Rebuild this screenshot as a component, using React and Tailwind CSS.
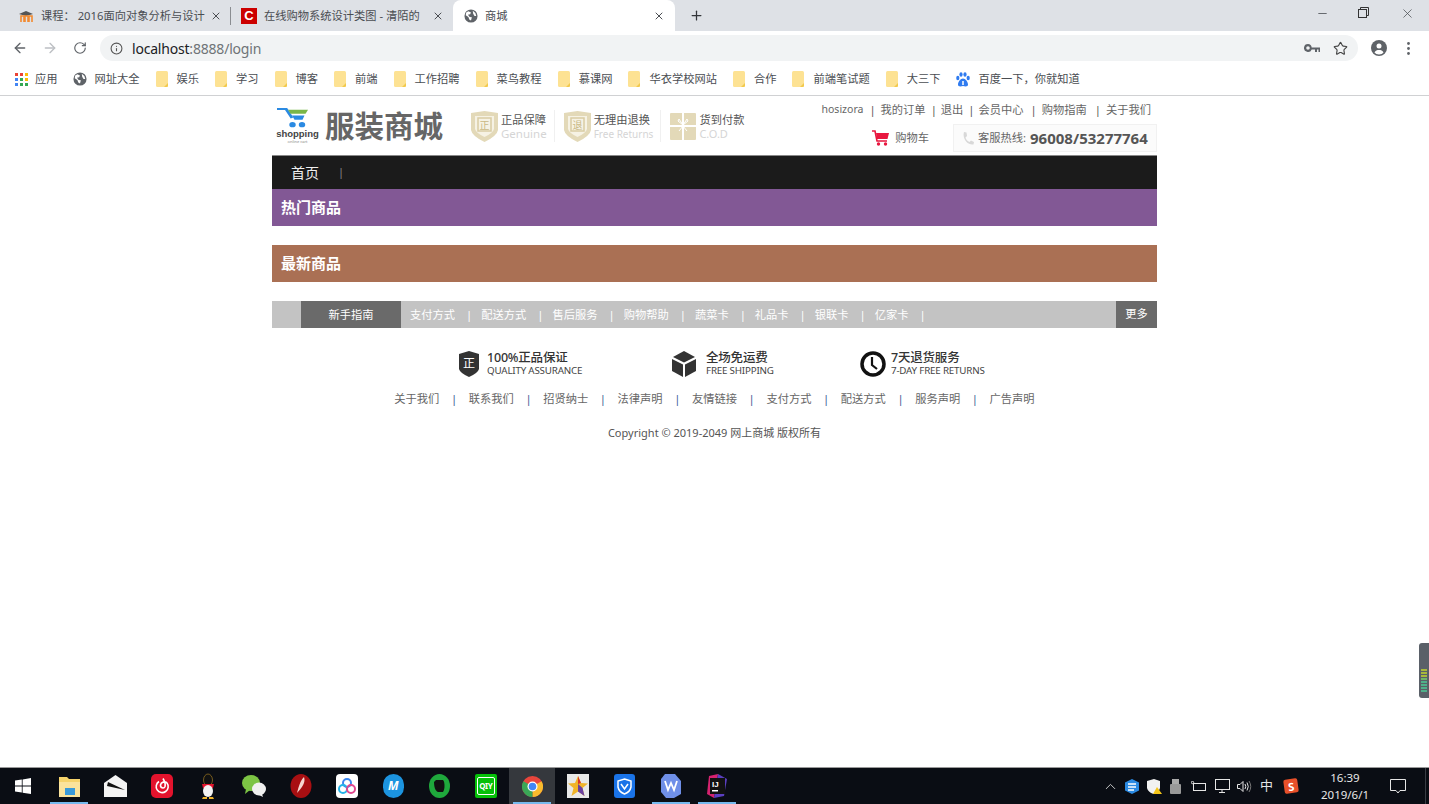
import React from "react";
import { ArrowLeft, ArrowRight, RotateCw, Info, Star, X, Plus, Minus, ChevronUp } from "lucide-react";

const bookmarks = [
  ["网址大全", "globe"], ["娱乐"], ["学习"], ["博客"], ["前端"], ["工作招聘"], ["菜鸟教程"], ["慕课网"],
  ["华衣学校网站"], ["合作"], ["前端笔试题"], ["大三下"], ["百度一下，你就知道", "paw"],
];
const topLinks = [
  ["我的订单", "ml-[6px] mr-[5px]"],
  ["退出", "ml-[5px] mr-[4px]"],
  ["会员中心", "ml-[5px] mr-[4px]"],
  ["购物指南", "ml-[7px] mr-[5px]"],
  ["关于我们", "ml-[8px] mr-[5px]"],
];
const guideLinks = ["支付方式", "配送方式", "售后服务", "购物帮助", "蔬菜卡", "礼品卡", "银联卡", "亿家卡"];
const footerLinks = ["关于我们", "联系我们", "招贤纳士", "法律声明", "友情链接", "支付方式", "配送方式", "服务声明", "广告声明"];

const Globe = ({ size = 14 }) => (
  <svg width={size} height={size} viewBox="0 0 16 16" className="shrink-0">
    <circle cx="8" cy="8" r="7.5" fill="#5f6368" />
    <path d="M5 2.500 8 4 7 6 4.500 6.500 6.500 9 9 9.500 8 13 6 12 5 9 2 7 2.500 4Z M10 2 13 4.500 14 8 12 8 10.500 5.500Z" fill="#fff" />
  </svg>
);

const Folder = () => (
  <svg width="12" height="16" viewBox="0 0 12 16" className="shrink-0">
    <path d="M0 1.500Q0 0 1.500 0H10.500Q12 0 12 1.500V14.500Q12 16 10.500 16H1.500Q0 16 0 14.500Z" fill="#fde293" />
    <path d="M8 16 12 12V14.500Q12 16 10.500 16Z" fill="#f2c94c" />
  </svg>
);

const Paw = () => (
  <svg width="14" height="15" viewBox="0 0 14 15" className="shrink-0">
    <g fill="#2f7bf0">
      <ellipse cx="1.800" cy="6" rx="1.600" ry="2.200" />
      <ellipse cx="5" cy="2.500" rx="1.600" ry="2.300" />
      <ellipse cx="9" cy="2.500" rx="1.600" ry="2.300" />
      <ellipse cx="12.200" cy="6" rx="1.600" ry="2.200" />
      <path d="M7 6.500C9.500 6.500 12 10 12 12.500 12 15 9 14.500 7 14 5 14.500 2 15 2 12.500 2 10 4.500 6.500 7 6.500Z" />
    </g>
    <path d="M7 9V13" stroke="#fff" strokeWidth="1.500" />
  </svg>
);

const Apps = () => (
  <svg width="13" height="13" viewBox="0 0 13 13" className="shrink-0">
    {["#ea4335", "#ea4335", "#fbbc04", "#4285f4", "#34a853", "#fbbc04", "#4285f4", "#34a853", "#34a853"].map((c, i) => (
      <rect key={i} x={(i % 3) * 5} y={Math.floor(i / 3) * 5} width="3" height="3" fill={c} />
    ))}
  </svg>
);

const Tab = ({ icon, text, active, className }) => (
  <div className={`flex items-center h-full shrink-0 ${className} ${active ? "bg-white rounded-t-lg" : ""}`}>
    {icon}
    <span className="ml-[7px] mt-[1px] flex-1 min-w-0 whitespace-nowrap text-[11.250px] text-[#4a4d52]">{text}</span>
    <X size={12} strokeWidth={2} className="text-[#4a4d52] shrink-0" />
  </div>
);

const Shield = ({ ch }) => (
  <svg width="27" height="31" viewBox="0 0 27 31" className="shrink-0">
    <path d="M0 2 13.500 0 27 2V19Q26 25 13.500 31 1 25 0 19Z" fill="#e3d9b8" />
    <path d="M4 5H23V18Q22 22 13.500 26 5 22 4 18Z" fill="#f6f2e4" />
    <rect x="7" y="7" width="13" height="13" fill="none" stroke="#d9cca3" strokeWidth="1.500" />
    <text x="13.500" y="18" textAnchor="middle" fontSize="10" fill="#c9b985">{ch}</text>
  </svg>
);

const Gift = () => (
  <svg width="26" height="27" viewBox="0 0 26 27" className="shrink-0">
    <rect width="26" height="27" rx="1" fill="#e3d9b8" />
    <path d="M12 0H14V27H12ZM0 12H26V14H0Z" fill="#fff" />
    <path d="M13 12 8 8 9 6ZM13 12 18 8 17 6ZM13 13 9 18M13 13 17 18" stroke="#fff" fill="none" />
  </svg>
);

const Badge = ({ icon, title, sub, subSize, divider }) => (
  <div className="flex items-center">
    {icon}
    <div className="ml-[3px] mt-[2px] leading-[14px]">
      <div className="text-[11.250px] text-[#555] whitespace-nowrap">{title}</div>
      <div className={`${subSize} text-[#d5d5d5] whitespace-nowrap`}>{sub}</div>
    </div>
    {divider && <div className="w-px h-[32px] bg-[#f0f0f0] mx-[7px]" />}
  </div>
);

const Logo = () => (
  <div className="flex flex-col items-start w-[41px] shrink-0">
    <svg width="32" height="20" viewBox="0 0 32 24" preserveAspectRatio="none">
      <path d="M0 1H9L15 12" fill="none" stroke="#2b8ae2" strokeWidth="3" />
      <path d="M11 2H31L28.500 7H13.500Z" fill="#7ab648" />
      <path d="M15 9H27.500L25.500 14H17.500Z" fill="#2b8ae2" />
      <circle cx="15.500" cy="20" r="3.200" fill="#2b8ae2" />
      <circle cx="25" cy="20" r="3.200" fill="#2b8ae2" />
    </svg>
    <div className="self-center text-[9.500px] leading-[10px] mt-[1px] font-bold text-[#444] font-['Liberation_Sans',sans-serif]">shopping</div>
    <div className="self-center text-[4px] leading-[5px] text-[#888]">online cart</div>
  </div>
);

const Service = ({ icon, title, sub, className }) => (
  <div className={`flex items-center shrink-0 ${className}`}>
    {icon}
    <div className="leading-[13px] whitespace-nowrap">
      <div className="text-[12.500px] font-medium text-[#333] tracking-[-0.2px]">{title}</div>
      <div className="text-[9.800px] text-[#444] tracking-[-0.2px]">{sub}</div>
    </div>
  </div>
);

const TaskIcon = ({ children, open, active }) => (
  <div className={`relative w-[46.300px] h-full flex items-center justify-center shrink-0 ${active ? "bg-[#35383d]" : ""}`}>
    {children}
    {open && <div className="absolute left-[4px] right-[4px] bottom-0 h-[2px] bg-[#76b9ed]" />}
  </div>
);

export default function App() {
  return (
    <div className="w-[1429px] h-[804px] overflow-hidden flex flex-col relative bg-white font-['Noto_Sans','Noto_Sans_CJK_SC',sans-serif]">
      {/* tab strip */}
      <div className="h-[31px] shrink-0 bg-[#dee1e6] flex pl-[8px] text-[#4a4d52]">
        <Tab
          className="w-[217px] pl-[10px] pr-[3px]"
          text="课程： 2016面向对象分析与设计"
          icon={<svg width="16" height="14" viewBox="0 0 16 14" className="shrink-0"><path d="M1 5 8 2 15 5 8 7Z" fill="#555" /><path d="M3 13V7H6V13M7 13V7H10V13M11 13V7H14V13" stroke="#f28a30" strokeWidth="1.600" fill="none" /></svg>}
        />
        <div className="w-px h-[18px] bg-[#8a8d91] mt-[7px] ml-[5px]" />
        <Tab
          className="w-[222px] pl-[10px] pr-[9px]"
          text="在线购物系统设计类图 - 清陌的"
          icon={<div className="w-[16px] h-[16px] bg-[#cc0000] flex items-center justify-center text-white font-bold text-[13px] leading-none shrink-0 font-['Liberation_Sans',sans-serif]">C</div>}
        />
        <Tab active className="w-[222px] pl-[11px] pr-[10px]" text="商城" icon={<Globe />} />
        <div className="flex items-center ml-[14px]"><Plus size={15} strokeWidth={2} className="text-[#33363a]" /></div>
        <div className="ml-auto flex items-start pt-[7px] text-[#4a4d52]">
          <Minus size={13} strokeWidth={1.500} className="mr-[29px]" />
          <svg width="11" height="11" viewBox="0 0 11 11" className="mr-[31px]" fill="none" stroke="#333" strokeWidth="1"><rect x="0.500" y="2.500" width="8" height="8" /><path d="M2.500 2.500V0.500H10.500V8.500H8.500" /></svg>
          <X size={15} strokeWidth={1.200} className="mr-[14px] -mt-[1px]" />
        </div>
      </div>

      {/* toolbar */}
      <div className="h-[32px] shrink-0 flex items-center bg-white text-[#5f6368] pt-[2px]">
        <ArrowLeft size={16} strokeWidth={2} className="ml-[12px]" />
        <ArrowRight size={16} strokeWidth={2} className="ml-[14px] text-[#bcbfc3]" />
        <RotateCw size={14} strokeWidth={2} className="ml-[15px]" />
        <div className="ml-[13px] w-[1258px] h-[26px] rounded-full bg-[#f1f3f4] flex items-center pl-[10px] pr-[9px]">
          <Info size={13} strokeWidth={2} className="text-[#555]" />
          <span className="ml-[9px] text-[14px] text-[#202124] tracking-[-0.2px]">localhost<span className="text-[#6f7377]">:8888/login</span></span>
          <svg width="16" height="9" viewBox="0 0 16 9" className="ml-auto mr-[13px]" fill="#5f6368"><path d="M4 0a4 4 0 1 0 3.700 5.500H11V8h2V5.500h1.500V8H16V3.500H7.700A4 4 0 0 0 4 0Zm0 2.200a1.800 1.800 0 1 1 0 3.600 1.800 1.800 0 0 1 0-3.600Z" /></svg>
          <Star size={15} strokeWidth={1.800} className="text-[#444] mr-[1px]" />
        </div>
        <svg width="16" height="16" viewBox="0 0 16 16" className="ml-[13px]"><circle cx="8" cy="8" r="8" fill="#5f6368" /><circle cx="8" cy="6" r="2.500" fill="#fff" /><path d="M3.500 12.500C4.500 10.500 6 10 8 10s3.500.5 4.500 2.500C11.500 13.800 10 14.500 8 14.500S4.500 13.800 3.500 12.500Z" fill="#fff" /></svg>
        <svg width="3" height="13" viewBox="0 0 3 13" className="ml-[20px]" fill="#5f6368"><circle cx="1.500" cy="1.500" r="1.400" /><circle cx="1.500" cy="6.500" r="1.400" /><circle cx="1.500" cy="11.500" r="1.400" /></svg>
      </div>

      {/* bookmarks */}
      <div className="h-[33px] shrink-0 flex items-center border-b border-[#d0d1d3] pl-[15px] text-[11.250px] text-[#4a4d52] bg-white">
        <div className="flex items-center gap-[7px] mr-[15px]"><Apps /><span>应用</span></div>
        {bookmarks.map(([name, kind]) => (
          <div key={name} className={`flex items-center mr-[16px] whitespace-nowrap ${kind ? "gap-[8px]" : "gap-[9px]"}`}>
            {kind === "globe" ? <Globe /> : kind === "paw" ? <Paw /> : <Folder />}
            <span>{name}</span>
          </div>
        ))}
      </div>

      {/* page */}
      <div className="flex-1 min-h-0 bg-white">
        <div className="w-[885px] ml-[272px]">
          <div className="h-[59px] flex justify-between">
            <div className="flex items-center pl-[5px] pt-[1px]">
              <Logo />
              <div className="ml-[7px] text-[29.500px] leading-none font-bold text-[#666] whitespace-nowrap w-[146px]">服装商城</div>
              <Badge icon={<Shield ch="正" />} title="正品保障" sub="Genuine" subSize="text-[11.500px]" divider />
              <div className="ml-[2px]"><Badge icon={<Shield ch="退" />} title="无理由退换" sub="Free Returns" subSize="text-[10px]" divider /></div>
              <div className="ml-[2px]"><Badge icon={<Gift />} title="货到付款" sub="C.O.D" subSize="text-[11px]" /></div>
            </div>
            <div className="flex flex-col items-end">
              <div className="flex items-center h-[28px] pr-[6px] text-[11.250px] text-[#666] whitespace-nowrap">
                <span className="text-[10.500px]">hosizora</span>
                {topLinks.map(([t, gap]) => (
                  <React.Fragment key={t}>
                    <span className={`${gap} text-[#555]`}>|</span>
                    <span>{t}</span>
                  </React.Fragment>
                ))}
              </div>
              <div className="flex items-center">
                <svg width="17" height="16" viewBox="0 0 17 16" className="mr-[6px]"><path d="M0 1H3L5 11H15" fill="none" stroke="#e8173f" strokeWidth="1.600" /><path d="M4 3H17L15.500 9H5Z" fill="#e8173f" /><circle cx="6.500" cy="14" r="1.700" fill="#e8173f" /><circle cx="13.500" cy="14" r="1.700" fill="#e8173f" /></svg>
                <span className="text-[11.250px] text-[#666] mr-[24px]">购物车</span>
                <div className="w-[204px] h-[28px] bg-[#fbfbfb] border border-[#f1f1f1] flex items-center pl-[8px] whitespace-nowrap">
                  <svg width="12" height="13" viewBox="0 0 12 13" fill="#d8d8d8"><path d="M2 0 4.500 0.500 5 4 3.500 5.500C4 7.500 5.500 9 7.500 10L9 8.500 12 10 11.500 12.500C6 13.500 0 7 2 0Z" /></svg>
                  <span className="ml-[4px] text-[11.250px] text-[#666]">客服热线:</span>
                  <span className="ml-[4px] text-[15px] font-bold text-[#555]">96008/53277764</span>
                </div>
              </div>
            </div>
          </div>

          <nav className="h-[34px] bg-[#1b1b1b] border-t border-[#888] flex items-center pl-[19px] pb-[1px] text-[14px] text-[#f0f0f0]">
            <span>首页</span>
            <span className="ml-[19px] text-[11px] text-[#888]">|</span>
          </nav>
          <div className="h-[37px] bg-[#825895] flex items-center pl-[9px] pb-[1px] text-[15px] font-bold text-white">热门商品</div>
          <div className="h-[37px] mt-[19px] bg-[#aa7054] flex items-center pl-[9px] pb-[1px] text-[15px] font-bold text-white">最新商品</div>

          <div className="h-[27px] mt-[19px] bg-[#c3c3c3] flex items-stretch text-[11.250px] text-white">
            <div className="ml-[29px] w-[100px] bg-[#6a6a6a] flex items-center justify-center pt-[1px]">新手指南</div>
            <div className="flex items-center pl-[9px] pt-[1px] flex-1">
              {guideLinks.map((t) => (
                <React.Fragment key={t}>
                  <span className="whitespace-nowrap">{t}</span>
                  <span className="ml-[11px] mr-[9px]">|</span>
                </React.Fragment>
              ))}
            </div>
            <div className="w-[41px] bg-[#6a6a6a] flex items-center justify-center">更多</div>
          </div>

          <div className="mt-[20px] h-[32px] flex items-center pl-[187px]">
            <Service
              className="w-[213px]"
              title="100%正品保证"
              sub="QUALITY ASSURANCE"
              icon={<svg width="20" height="26" viewBox="0 0 20 26" className="mr-[8px]"><path d="M0 3 10 0 20 3V18Q19 22 10 26 1 22 0 18Z" fill="#333" /><text x="10" y="17" textAnchor="middle" fontSize="12" fill="#fff">正</text></svg>}
            />
            <Service
              className="w-[188px]"
              title="全场免运费"
              sub="FREE SHIPPING"
              icon={<svg width="24" height="26" viewBox="0 0 24 26" className="mr-[10px]" fill="#333"><path d="M12 0 23 6 12 11.500 1 6Z" /><path d="M0 8 11 13.500V26L0 20Z" /><path d="M24 8 13 13.500V26L24 20Z" /></svg>}
            />
            <Service
              title="7天退货服务"
              sub="7-DAY FREE RETURNS"
              icon={<svg width="26" height="26" viewBox="0 0 26 26" className="mr-[5px]" fill="none" stroke="#111"><circle cx="13" cy="13" r="11" strokeWidth="3.500" /><path d="M12 6V14L17 18" strokeWidth="2.200" /></svg>}
            />
          </div>

          <div className="mt-[10px] h-[18px] flex items-center justify-center text-[11.250px] text-[#666] whitespace-nowrap">
            {footerLinks.map((t, i) => (
              <React.Fragment key={t}>
                {i > 0 && <span className="mx-[11.600px] text-[#3c5a94]">|</span>}
                <span>{t}</span>
              </React.Fragment>
            ))}
          </div>
          <div className="mt-[16px] text-center text-[11px] leading-[18px] text-[#555]">Copyright © 2019-2049 网上商城 版权所有</div>
        </div>
      </div>

      {/* side widget */}
      <div className="absolute right-0 top-[643px] w-[10px] h-[55px] bg-[#5a6068] rounded-l-[3px] flex flex-col justify-end items-center pb-[6px] gap-px">
        {["bg-[#a8b83c]", "bg-[#a8b83c]", "bg-[#a8b83c]", "bg-[#6fb56a]", "bg-[#4fb08a]", "bg-[#4fb08a]", "bg-[#4fb08a]", "bg-[#4fb08a]"].map((c, i) => (
          <div key={i} className={`w-[6px] h-[2px] ${c}`} />
        ))}
      </div>

      {/* taskbar */}
      <div className="h-[37px] shrink-0 bg-[#0a0d14] border-t border-[#9a9a9a] flex items-stretch text-white">
        <div className="w-[46px] flex items-center justify-center shrink-0">
          <svg width="16" height="16" viewBox="0 0 16 16" fill="#fff"><path d="M0 2.500 6.800 1.500V7.500H0ZM7.600 1.400 16 0V7.500H7.600ZM0 8.400H6.800V14.500L0 13.500ZM7.600 8.400H16V16L7.600 14.700Z" /></svg>
        </div>
        <TaskIcon open><svg width="21" height="24" viewBox="0 0 21 24"><path d="M0 3H8L10 5H21V23H0Z" fill="#f6d36b" /><path d="M0 8H21V23H0Z" fill="#fbe39c" /><rect x="6" y="14" width="10" height="7" fill="#3a9ad9" /></svg></TaskIcon>
        <TaskIcon><svg width="23" height="22" viewBox="0 0 23 22"><path d="M11.500 0 23 8V22H0V8Z" fill="#f4f4f4" /><path d="M4 7 21 15 3 11Z" fill="#111" /></svg></TaskIcon>
        <TaskIcon><svg width="22" height="24" viewBox="0 0 22 24"><rect width="22" height="24" rx="5" fill="#e3132d" /><path d="M8 7.500A6 6 0 1 0 16 9C14 7 10 8 9.500 11 9.200 14 13 15 14 12.500 14.500 10.500 13.500 7 12 4.500" fill="none" stroke="#fff" strokeWidth="1.600" /></svg></TaskIcon>
        <TaskIcon><svg width="14" height="26" viewBox="0 0 14 26"><ellipse cx="7" cy="7" rx="4.500" ry="6" fill="#111" stroke="#d8a22a" strokeWidth=".5" /><path d="M1 11H13L12 15H2Z" fill="#e3132d" /><ellipse cx="7" cy="18" rx="5" ry="6" fill="#f3f3f3" /><path d="M2 24H6V26H1ZM8 24H12L13 26H8Z" fill="#f0b429" /></svg></TaskIcon>
        <TaskIcon><svg width="24" height="22" viewBox="0 0 24 22"><ellipse cx="9" cy="8" rx="9" ry="8" fill="#7cc444" /><path d="M4 14 3 19 8 15Z" fill="#7cc444" /><ellipse cx="17" cy="14" rx="7" ry="6.500" fill="#f0f0f0" /><path d="M20 19 21 22 17 20Z" fill="#f0f0f0" /></svg></TaskIcon>
        <TaskIcon><svg width="22" height="24" viewBox="0 0 22 24"><ellipse cx="11" cy="12" rx="10.500" ry="12" fill="#a80f12" /><path d="M14 3C16 8 12 14 7 19 9 12 10 7 14 3Z" fill="#f6d6d0" /></svg></TaskIcon>
        <TaskIcon><div className="w-[22px] h-[24px] bg-white rounded-[4px] flex items-center justify-center"><svg width="18" height="18" viewBox="0 0 18 18" fill="none" strokeWidth="2"><circle cx="9" cy="6" r="4" stroke="#3b86f0" /><circle cx="5" cy="12" r="4" stroke="#24b3e8" /><circle cx="13" cy="12" r="4" stroke="#e0478f" /></svg></div></TaskIcon>
        <TaskIcon><div className="w-[21px] h-[24px] rounded-full bg-[#1c94e0] flex items-center justify-center text-[12px] font-bold italic">M</div></TaskIcon>
        <TaskIcon><svg width="21" height="24" viewBox="0 0 21 24"><ellipse cx="10.500" cy="12" rx="10.500" ry="12" fill="#1fa83c" /><path d="M7 6H14C16 8 16 15 14 18H9C6 17 5 12 5 8Z" fill="#111" /></svg></TaskIcon>
        <TaskIcon><div className="w-[22px] h-[24px] bg-[#05c008] rounded-[2px] flex items-center justify-center"><div className="w-[18px] h-[18px] border border-white rounded-[2px] text-[8px] font-bold flex items-center justify-center tracking-tighter">QIY</div></div></TaskIcon>
        <TaskIcon open active><svg width="21" height="21" viewBox="0 0 21 21"><circle cx="10.500" cy="10.500" r="10.500" fill="#e8453c" /><path d="M10.500 10.500 19.600 5.250A10.500 10.500 0 0 1 10.500 21Z" fill="#f9bb2d" /><path d="M10.500 10.500 10.500 21A10.500 10.500 0 0 1 1.400 5.250Z" fill="#3aa757" /><circle cx="10.500" cy="10.500" r="5" fill="#fff" /><circle cx="10.500" cy="10.500" r="3.800" fill="#4285f4" /></svg></TaskIcon>
        <TaskIcon><div className="w-[22px] h-[24px] bg-[#e8e8e8] flex items-center justify-center"><svg width="20" height="20" viewBox="0 0 20 20"><path d="M10 0 13 7 20 7.500 14.500 12 16.500 20 10 15.500 3.500 20 5.500 12 0 7.500 7 7Z" fill="#f0b429" /><path d="M10 8 14.500 12 16.500 20 10 15.500Z" fill="#6a3fa0" /><path d="M10 0 13 7 10 8Z" fill="#d9342b" /></svg></div></TaskIcon>
        <TaskIcon><div className="w-[21px] h-[24px] bg-[#1a73e8] rounded-[3px] flex items-center justify-center"><svg width="15" height="17" viewBox="0 0 15 17" fill="none" stroke="#fff" strokeWidth="1.500"><path d="M7.500 1 14 3V9Q13 14 7.500 16 2 14 1 9V3Z" /><path d="M4 6 7.500 11 11 6" /></svg></div></TaskIcon>
        <TaskIcon open><svg width="22" height="24" viewBox="0 0 22 24"><path d="M5 0H15L21 7V20L14 24H6L1 18V5Z" fill="#6f8fe8" /><path d="M5 7 8 16 11 9 14 16 17 7" fill="none" stroke="#fff" strokeWidth="1.800" /></svg></TaskIcon>
        <TaskIcon open><svg width="22" height="24" viewBox="0 0 22 24"><path d="M3 2 12 0 8 24 1 20Z" fill="#d6226f" /><path d="M12 0 21 5 18 22 8 24Z" fill="#5a3fc0" /><rect x="4" y="4" width="15" height="16" fill="#111" /><rect x="6" y="16" width="6" height="1.500" fill="#fff" /><text x="6" y="13" fontSize="8" fontWeight="700" fill="#fff" fontFamily="Liberation Sans">IJ</text></svg></TaskIcon>

        <div className="ml-auto flex items-center relative">
          <ChevronUp size={17} strokeWidth={1.300} className="text-[#d5d5d5] mr-[6px]" />
          <svg width="14" height="15" viewBox="0 0 14 15" className="mr-[8px]"><path d="M7 0 14 3.500V11.500L7 15 0 11.500V3.500Z" fill="#2b8ae2" /><path d="M3 5H11M3 8H11M3 11H9" stroke="#fff" strokeWidth="1.500" /></svg>
          <svg width="15" height="15" viewBox="0 0 15 15" className="mr-[8px]"><path d="M0 2 7 0 13 2V9Q12 13 6.500 15 1 13 0 9Z" fill="#f2f2f2" /><path d="M10 8 15 15H6Z" fill="#f5c518" /></svg>
          <svg width="11" height="15" viewBox="0 0 11 15" className="mr-[10px]"><rect x="2" y="0" width="7" height="5" fill="#aaa" /><rect y="5" width="11" height="10" rx="1" fill="#999" /></svg>
          <svg width="15" height="10" viewBox="0 0 15 10" className="mr-[8px]" fill="none" stroke="#e5e5e5"><rect x="2.500" y="2.500" width="12" height="7" /><circle cx="1.500" cy="1.500" r="1.200" /></svg>
          <svg width="16" height="14" viewBox="0 0 16 14" className="mr-[7px]" fill="none" stroke="#e5e5e5"><rect x="1.500" y=".5" width="14" height="10" /><path d="M8 11V13.500M5 13.500H11" /></svg>
          <svg width="15" height="13" viewBox="0 0 15 13" className="mr-[8px]" fill="none" stroke="#e5e5e5"><path d="M.5 4.500H3L6 1.500V11.500L3 8.500H.5Z" /><path d="M8 4Q9.500 6.500 8 9M10 2.500Q12.500 6.500 10 10.500" /><path d="M12 1Q15.500 6.500 12 12" stroke="#777" /></svg>
          <span className="text-[13px] text-[#e5e5e5] mr-[11px]">中</span>
          <div className="w-[14px] h-[14px] bg-[#e8502a] rounded-[2px] rotate-[-8deg] flex items-center justify-center text-[11px] font-bold leading-none mr-[16px]">S</div>
          <div className="w-[62px] text-center text-[11.500px] leading-[17px] text-[#e8e8e8] mr-[14px]">
            <div>16:39</div>
            <div>2019/6/1</div>
          </div>
          <svg width="16" height="15" viewBox="0 0 16 15" fill="none" stroke="#e5e5e5" className="mr-[23px]"><path d="M.5.500H15.500V11.500H10L8 14 6 11.500H.5Z" /></svg>
          <div className="absolute right-[3px] top-0 bottom-0 w-px bg-[#3a3d44]" />
        </div>
      </div>
    </div>
  );
}
